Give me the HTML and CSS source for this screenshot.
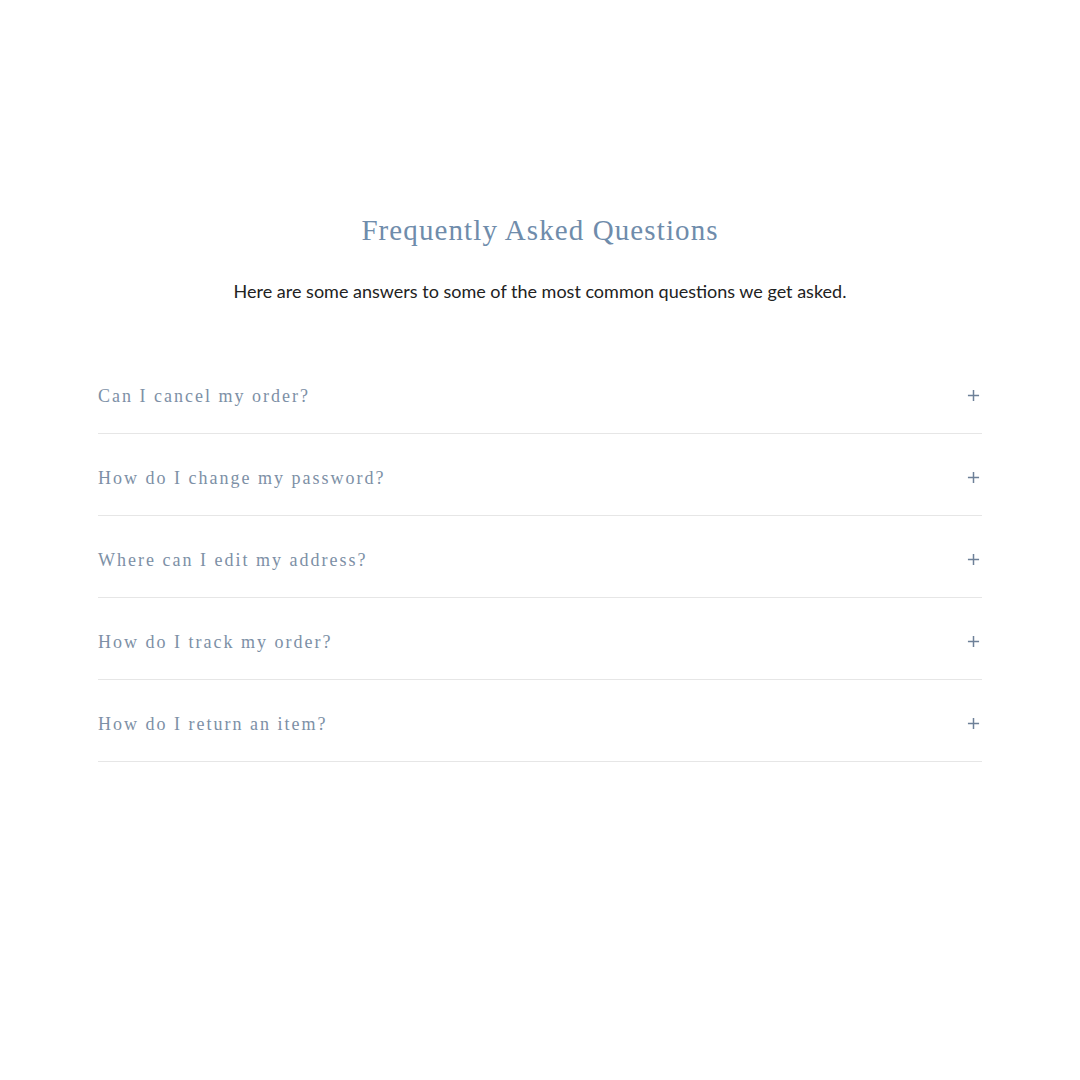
FILE: index.html
```html
<!DOCTYPE html>
<html lang="en">
<head>
  <meta charset="UTF-8" />
  <meta name="viewport" content="width=device-width, initial-scale=1.0" />
  <title>FAQ</title>
  <link rel="stylesheet" href="styles.css">
</head>
<body>
  <main class="faq">
    <h1>Frequently Asked Questions</h1>
    <p class="intro">Here are some answers to some of the most common questions we get asked.</p>

    <div class="list">
      <div class="item">
        <span class="question">Can I cancel my order?</span>
        <svg class="plus" viewBox="0 0 14 14"><path d="M7 1v12M1 7h12" /></svg>
      </div>
      <div class="item">
        <span class="question">How do I change my password?</span>
        <svg class="plus" viewBox="0 0 14 14"><path d="M7 1v12M1 7h12" /></svg>
      </div>
      <div class="item">
        <span class="question">Where can I edit my address?</span>
        <svg class="plus" viewBox="0 0 14 14"><path d="M7 1v12M1 7h12" /></svg>
      </div>
      <div class="item">
        <span class="question">How do I track my order?</span>
        <svg class="plus" viewBox="0 0 14 14"><path d="M7 1v12M1 7h12" /></svg>
      </div>
      <div class="item">
        <span class="question">How do I return an item?</span>
        <svg class="plus" viewBox="0 0 14 14"><path d="M7 1v12M1 7h12" /></svg>
      </div>
    </div>
  </main>
</body>
</html>
```

FILE: styles.css
```css
body {
  margin: 0;
  padding: 0;
  background: #ffffff;
  font-family: 'Lato', sans-serif;
}
.faq {
  max-width: 884px;
  margin: 0 auto;
  padding-top: 208px;
}
h1 {
  margin: 0;
  text-align: center;
  font-family: 'Liberation Serif', serif;
  font-weight: 400;
  font-size: 29px;
  letter-spacing: 1.1px;
  line-height: 44px;
  color: #6f8cab;
}
.intro {
  margin: 28px 0 0;
  text-align: center;
  font-size: 18px;
  line-height: 22px;
  color: #222222;
}
.list {
  margin-top: 50px;
}
.item {
  display: flex;
  justify-content: space-between;
  align-items: center;
  height: 81px;
  border-bottom: 1px solid #e6e6e6;
}
.question {
  font-family: 'Liberation Serif', serif;
  font-size: 18px;
  letter-spacing: 2px;
  color: #7d90a6;
  margin-top: 8px;
}
.plus {
  width: 13px;
  height: 13px;
  margin-right: 2px;
  margin-top: 6px;
  fill: none;
  stroke: #6d8098;
  stroke-width: 1.6;
}
```
